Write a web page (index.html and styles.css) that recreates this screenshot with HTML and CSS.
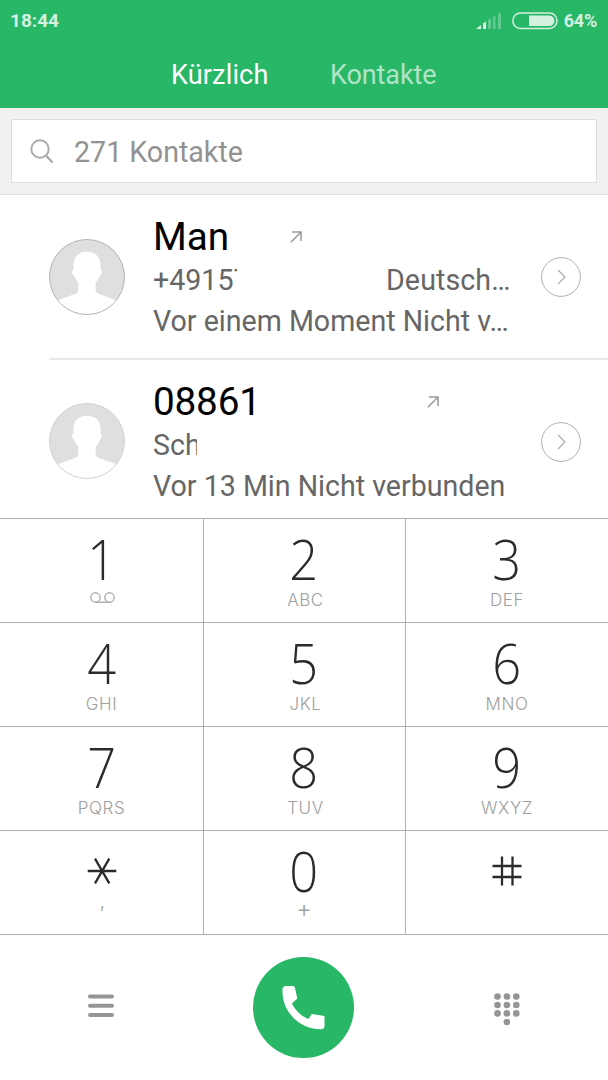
FILE: index.html
```html
<!DOCTYPE html>
<html lang="de">
<head>
<meta charset="utf-8">
<title>Telefon</title>
<link rel="stylesheet" href="styles.css">
</head>
<body>
<svg class="defs" width="0" height="0">
  <symbol id="avatar" viewBox="0 0 76 76">
    <clipPath id="disc"><circle cx="38" cy="38" r="37.5"/></clipPath>
    <circle cx="38" cy="38" r="37.5" fill="#dde0df"/>
    <path clip-path="url(#disc)" fill="#fff" d="M38 12.800C46.500 12.800 51.600 18 51.600 26L51.500 31C53.500 31 53 36 51 36.300C50 40 48 42 46.600 44V51C46.800 53 48 54 50 55L66.500 61L76 80H0L9.500 61L26 55C28 54 29.200 53 29.300 51V44C28 42 26 40 25 36.300C22.500 36 22 31 24.500 31V26C24.500 18 29.500 12.800 38 12.800Z"/>
    <circle cx="38" cy="38" r="37.500" fill="none" stroke="currentColor"/>
  </symbol>
  <symbol id="outgoing" viewBox="0 0 12 12"><path d="M.8 11.200L10.800 1.200M2 1H11V10" fill="none" stroke="#999" stroke-width="1.500"/></symbol>
  <symbol id="more" viewBox="0 0 40 40"><circle cx="20" cy="20" r="19.400" fill="none" stroke="#b0b0b0"/><path d="M17 13L24 20L17 27" fill="none" stroke="#aaa" stroke-width="1.200"/></symbol>
</svg>
<header class="header">
  <div class="status">
    <span class="clock">18:44</span>
    <svg class="signal" width="26" height="18" viewBox="0 0 26 18"><g fill="#fff"><path opacity=".85" d="M0 17L5 13V17ZM7 11.500L10 9.500V17H7Z"/><path opacity=".28" d="M12 8L15 6V17H12ZM17 5L19.500 3.500V17H17ZM22 2L25 .5V17H22Z"/></g></svg>
    <svg class="battery" width="46" height="18" viewBox="0 0 46 18"><rect x=".8" y="1" width="44.200" height="15.500" rx="7.700" fill="none" stroke="#d4f1e0" stroke-width="1.500"/><path d="M17 3.500H37.200A5.200 5.200 0 0 1 37.200 14H17Z" fill="#d4f1e0"/></svg>
    <span class="percent">64%</span>
  </div>
  <nav class="tabs"><span class="tab active">Kürzlich</span><span class="tab">Kontakte</span></nav>
</header>
<div class="search">
  <div class="field">
    <svg width="24" height="25" viewBox="0 0 24 25"><circle cx="10" cy="10" r="8.700" fill="none" stroke="#aaa" stroke-width="2"/><path d="M16 16.500L22.500 23.500" stroke="#aaa" stroke-width="2.300"/></svg>
    <span class="hint">271 Kontakte</span>
  </div>
</div>
<main class="calls">
  <article class="call">
    <svg class="avatar dark"><use href="#avatar"/></svg>
    <div class="info">
      <div class="name"><span class="name-first">Man</span><svg class="arrow"><use href="#outgoing"/></svg></div>
      <div class="detail"><span class="phone">+49157</span><span class="country">Deutsch…</span></div>
      <div class="time">Vor einem Moment Nicht v…</div>
    </div>
    <svg class="more"><use href="#more"/></svg>
  </article>
  <article class="call">
    <svg class="avatar"><use href="#avatar"/></svg>
    <div class="info">
      <div class="name"><span class="name-second">08861</span><svg class="arrow"><use href="#outgoing"/></svg></div>
      <div class="detail"><span class="place">Sch</span></div>
      <div class="time">Vor 13 Min Nicht verbunden</div>
    </div>
    <svg class="more"><use href="#more"/></svg>
  </article>
</main>
<section class="keypad">
  <div class="key"><b>1</b><svg class="voicemail" width="25" height="12" viewBox="0 0 25 12"><g fill="none" stroke="#b0b0b0" stroke-width="1.400"><circle cx="5.500" cy="5.500" r="4.700"/><circle cx="19.500" cy="5.500" r="4.700"/><path d="M5.500 10.300H19.500"/></g></svg></div>
  <div class="key"><b>2</b><i>ABC</i></div>
  <div class="key"><b>3</b><i>DEF</i></div>
  <div class="key"><b>4</b><i>GHI</i></div>
  <div class="key"><b>5</b><i>JKL</i></div>
  <div class="key"><b>6</b><i>MNO</i></div>
  <div class="key"><b>7</b><i>PQRS</i></div>
  <div class="key"><b>8</b><i>TUV</i></div>
  <div class="key"><b>9</b><i>WXYZ</i></div>
  <div class="key"><svg class="symbol" viewBox="0 0 30 30"><path d="M.7 15H29.300M8 2.600L22.300 27.400M22.300 2.600L8 27.400" stroke="#2b2b2b" stroke-width="2.300"/></svg><i class="comma">,</i></div>
  <div class="key"><b>0</b><i class="plus">+</i></div>
  <div class="key"><svg class="symbol" viewBox="0 0 30 30"><path d="M.5 10H29.500M.5 21H29.500M10 .5V29.500M20.500 .5V29.500" stroke="#2b2b2b" stroke-width="2.300"/></svg></div>
</section>
<footer class="actions">
  <svg class="menu" width="26" height="24" viewBox="0 0 26 24"><path d="M2 2.500H24M2 11.700H24M2 21H24" stroke="#959595" stroke-width="4" stroke-linecap="round"/></svg>
  <div class="dial"><svg width="44" height="45" viewBox="0 0 44 45"><path fill="#fff" d="M4 1H11Q12.500 1 13 3L15.300 13.500L10 18.500C13 25 19 31 26.500 34L29.800 29L42.500 31V41Q42.500 44.300 39 44.300C18 44.500 .5 27 .5 7V4.500Q.5 1 4 1Z"/></svg></div>
  <svg class="pad" width="26" height="33" viewBox="0 0 26 33"><g fill="#959595"><circle cx="3.500" cy="3.500" r="3.300"/><circle cx="12.900" cy="3.500" r="3.300"/><circle cx="22.300" cy="3.500" r="3.300"/><circle cx="3.500" cy="12" r="3.300"/><circle cx="12.900" cy="12" r="3.300"/><circle cx="22.300" cy="12" r="3.300"/><circle cx="3.500" cy="20.400" r="3.300"/><circle cx="12.900" cy="20.400" r="3.300"/><circle cx="22.300" cy="20.400" r="3.300"/><circle cx="12.900" cy="29" r="3.300"/></g></svg>
</footer>
</body>
</html>
```
FILE: styles.css
```css
* { box-sizing: border-box; }
body { margin: 0; width: 608px; height: 1080px; overflow: hidden; background: #fff; font-family: Roboto, "Liberation Sans", sans-serif; color: #666; }
svg { display: block; flex: none; }
.defs { display: none; }
.header { height: 108px; background: #28b767; color: #fff; }
.status { height: 40px; padding: 1px 11px 0 10px; display: flex; align-items: center; color: #d4f1e0; font-weight: 700; line-height: 38px; }
.clock { font-size: 19px; }
.signal { margin-left: auto; margin-right: 10px; }
.battery { margin-right: 6px; }
.percent { padding-top: 1px; font-size: 18px; letter-spacing: -.2px; }
.tabs { height: 68px; padding-left: 171px; display: flex; font-size: 27px; line-height: 71px; }
.tab { width: 159px; white-space: nowrap; letter-spacing: -.1px; color: rgba(255,255,255,.65); }
.active { letter-spacing: .15px; color: #fff; }
.search { height: 87px; padding: 11px; background: #f1f1f1; border-bottom: 1px solid #ddd; }
.field { height: 64px; padding-left: 18px; display: flex; align-items: center; gap: 20px; background: #fff; border: 1px solid #ddd; border-radius: 2px; font-size: 28.600px; color: #929292; }
.hint { padding-top: 2px; }
.calls { height: 323px; }
.call { height: 165px; margin-left: 49px; padding-right: 27px; display: flex; border-bottom: 2px solid #e8e8e8; }
.call:last-child { border: 0; height: 158px; }
.avatar { width: 76px; height: 76px; margin-top: 44px; color: #d0d2d1; }
.call:last-child .avatar { margin-top: 43px; }
.avatar.dark { color: #b2b4b3; }
.info { width: 388px; padding: 17px 0 0 28px; white-space: nowrap; font-size: 28.600px; }
.name { height: 49px; display: flex; align-items: center; font-size: 38.700px; line-height: 50px; color: #000; }
.name-first { width: 137px; }
.name-second { width: 274px; letter-spacing: -.2px; }
.arrow { width: 12px; height: 12px; }
.detail { display: flex; height: 38px; line-height: 38px; }
.phone { width: 84px; margin-right: 149px; overflow: hidden; }
.country { letter-spacing: .1px; }
.place { width: 44px; overflow: hidden; }
.time { height: 44px; line-height: 44px; }
.more { width: 40px; height: 40px; margin-top: 62px; margin-left: auto; }
.keypad { display: grid; grid-template-columns: 203px 202px 203px; grid-template-rows: repeat(4, 104px); border-bottom: 1px solid #b0b0b0; }
.key { display: flex; flex-direction: column; align-items: center; border-top: 1px solid #b0b0b0; border-left: 1px solid #b0b0b0; }
.key:nth-child(3n+1) { border-left: 0; }
.key b { height: 50px; margin: 15px 0 6px; font-family: "Open Sans", sans-serif; font-size: 55px; font-weight: 300; line-height: 50px; color: #2b2b2b; transform: scaleX(.92); }
.key:nth-child(3n+2) b { margin-right: 1px; }
.key i { font: 300 17px/20px Inter, "Liberation Sans", sans-serif; letter-spacing: .6px; color: #a0a0a0; }
.key:nth-child(3n+2) i { margin-left: 2px; }
.voicemail { margin: 2px 0 0 2px; }
.symbol { width: 30px; height: 30px; margin: 25px 0 11px; }
.key i.comma { margin: -6px 0 0 2px; font-size: 20px; }
.key i.plus { margin: -3px 0 0; font-size: 24px; }
.actions { height: 145px; padding: 0 88px; display: flex; justify-content: space-between; align-items: center; }
.menu { margin-bottom: 4px; }
.pad { margin-top: 4px; }
.dial { width: 101px; height: 101px; margin-right: 1px; margin-bottom: 1px; display: grid; place-items: center; border-radius: 50%; background: #28b767; }
```
